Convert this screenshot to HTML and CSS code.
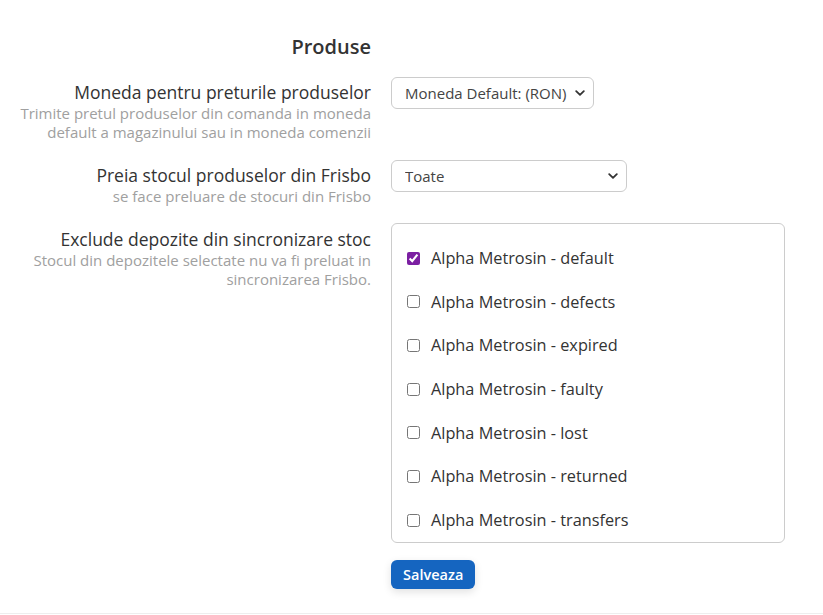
FILE: index.html
```html
<!DOCTYPE html>
<html lang="ro">
<head>
    <meta charset="UTF-8">
    <meta name="viewport" content="width=device-width, initial-scale=1.0">
    <title>Setari Produse</title>
    <link rel="stylesheet" href="styles.css">
</head>
<body>
    <div class="page">
        <form class="settings">
            <div class="row">
                <h4 class="section-title">Produse</h4>
            </div>

            <div class="row">
                <div class="label-col">
                    <label for="currency">Moneda pentru preturile produselor</label>
                    <p class="hint">Trimite pretul produselor din comanda in moneda default a magazinului sau in moneda comenzii</p>
                </div>
                <div class="field-col">
                    <span class="select-wrap select-sm">
                        <select id="currency" name="currency">
                            <option>Moneda Default: (RON)</option>
                            <option>Moneda comenzii</option>
                        </select>
                        <svg class="chevron" viewBox="0 0 10 6" width="10" height="6"><path d="M1.2 1.2 5 4.8l3.8-3.6" fill="none" stroke="#333" stroke-width="1.8" stroke-linecap="round" stroke-linejoin="round"/></svg>
                    </span>
                </div>
            </div>

            <div class="row row-stock">
                <div class="label-col">
                    <label for="stock">Preia stocul produselor din Frisbo</label>
                    <p class="hint">se face preluare de stocuri din Frisbo</p>
                </div>
                <div class="field-col">
                    <span class="select-wrap select-md">
                        <select id="stock" name="stock">
                            <option>Toate</option>
                            <option>Niciunul</option>
                        </select>
                        <svg class="chevron" viewBox="0 0 10 6" width="10" height="6"><path d="M1.2 1.2 5 4.8l3.8-3.6" fill="none" stroke="#333" stroke-width="1.8" stroke-linecap="round" stroke-linejoin="round"/></svg>
                    </span>
                </div>
            </div>

            <div class="row row-list">
                <div class="label-col">
                    <label>Exclude depozite din sincronizare stoc</label>
                    <p class="hint">Stocul din depozitele selectate nu va fi preluat in sincronizarea Frisbo.</p>
                </div>
                <div class="field-col">
                    <div class="check-list">
                        <label class="check"><input type="checkbox" name="wh" value="default" checked> Alpha Metrosin - default</label>
                        <label class="check"><input type="checkbox" name="wh" value="defects"> Alpha Metrosin - defects</label>
                        <label class="check"><input type="checkbox" name="wh" value="expired"> Alpha Metrosin - expired</label>
                        <label class="check"><input type="checkbox" name="wh" value="faulty"> Alpha Metrosin - faulty</label>
                        <label class="check"><input type="checkbox" name="wh" value="lost"> Alpha Metrosin - lost</label>
                        <label class="check"><input type="checkbox" name="wh" value="returned"> Alpha Metrosin - returned</label>
                        <label class="check"><input type="checkbox" name="wh" value="transfers"> Alpha Metrosin - transfers</label>
                    </div>
                </div>
            </div>

            <div class="row">
                <div class="label-col"></div>
                <div class="field-col">
                    <button type="submit" class="btn-save">Salveaza</button>
                </div>
            </div>
        </form>
    </div>
</body>
</html>
```

FILE: styles.css
```css
body {
    font-family: "Open Sans", "Noto Sans", sans-serif;
    margin: 0;
    background-color: #fff;
    color: #333;
}
.page {
    height: 614px;
    border-bottom: 1px solid #eee;
    box-sizing: border-box;
    padding-top: 33px;
}
.row {
    display: grid;
    grid-template-columns: 371px 394px;
    column-gap: 20px;
    margin-bottom: 18px;
}
.row:first-child {
    margin-bottom: 16px;
}
.row-stock {
    margin-bottom: 17px;
}
.row-list {
    margin-bottom: 17px;
}
.section-title {
    margin: 0;
    font-size: 20px;
    font-weight: 600;
    line-height: 28px;
    text-align: right;
    color: #333;
}
.label-col {
    text-align: right;
    padding-top: 3px;
}
.row-list .label-col {
    padding-top: 4px;
}
.label-col label {
    display: block;
    font-size: 17.5px;
    line-height: 24px;
    color: #333;
}
.hint {
    margin: 0;
    font-size: 15px;
    line-height: 19px;
    color: #a0a0a0;
}

/* Selects */
.select-wrap {
    position: relative;
    display: inline-block;
}
.select-wrap select {
    appearance: none;
    -webkit-appearance: none;
    height: 32px;
    padding: 0 20px 0 13px;
    font-family: inherit;
    font-size: 15px;
    color: #444;
    background: #fff;
    border: 1px solid #ccc;
    border-radius: 6px;
    outline: none;
}
.select-sm select {
    width: 203px;
}
.select-md select {
    width: 236px;
}
.chevron {
    position: absolute;
    right: 9px;
    top: 13px;
    pointer-events: none;
}

/* Warehouse list */
.check-list {
    border: 1px solid #ccc;
    border-radius: 6px;
    padding: 22px 15px 10px;
}
.check {
    display: flex;
    align-items: center;
    height: 24px;
    margin-bottom: 19.7px;
    font-size: 16.3px;
    color: #333;
}
.check:last-child {
    margin-bottom: 0;
}
.check input {
    width: 13px;
    height: 13px;
    margin: 0 11px 0 0;
    accent-color: #7b1fa2;
}

.btn-save {
    height: 29px;
    padding: 0 12px;
    font-family: inherit;
    font-size: 14.5px;
    font-weight: 600;
    color: #fff;
    background-color: #1565c0;
    border: none;
    border-radius: 6px;
    box-shadow: 0 3px 8px rgba(0, 0, 0, 0.12);
    cursor: pointer;
}
.btn-save:hover {
    background-color: #0d5bb5;
}
```
